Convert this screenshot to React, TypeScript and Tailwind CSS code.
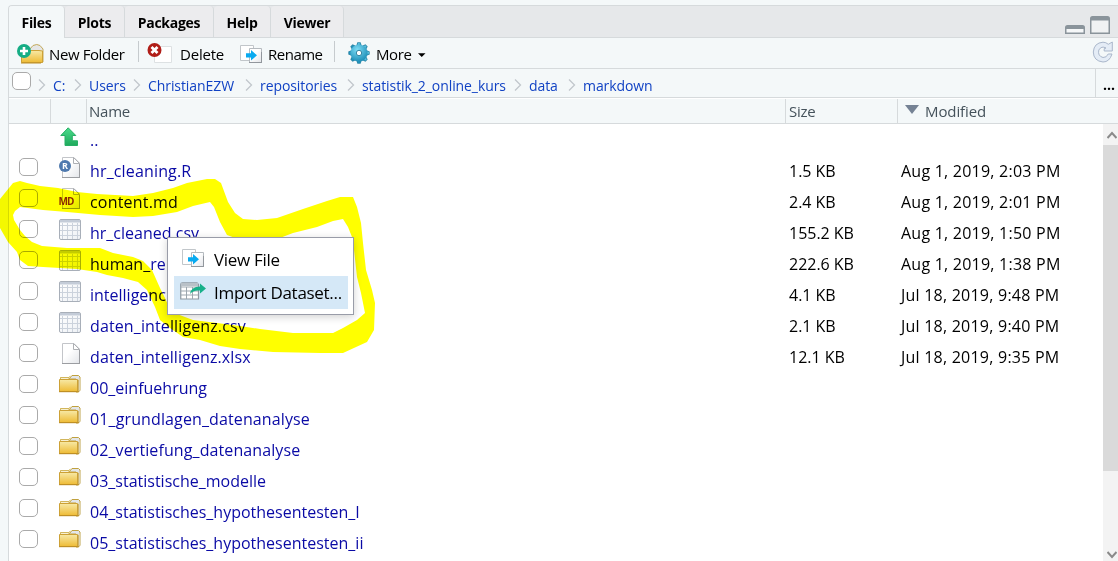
import React from "react";

type Kind = "r" | "md" | "csv" | "file" | "folder";

const files: { name: string; kind: Kind; size?: string; date?: string }[] = [
  { name: "hr_cleaning.R", kind: "r", size: "1.5 KB", date: "Aug 1, 2019, 2:03 PM" },
  { name: "content.md", kind: "md", size: "2.4 KB", date: "Aug 1, 2019, 2:01 PM" },
  { name: "hr_cleaned.csv", kind: "csv", size: "155.2 KB", date: "Aug 1, 2019, 1:50 PM" },
  { name: "human_re", kind: "csv", size: "222.6 KB", date: "Aug 1, 2019, 1:38 PM" },
  { name: "intelligenc", kind: "csv", size: "4.1 KB", date: "Jul 18, 2019, 9:48 PM" },
  { name: "daten_intelligenz.csv", kind: "csv", size: "2.1 KB", date: "Jul 18, 2019, 9:40 PM" },
  { name: "daten_intelligenz.xlsx", kind: "file", size: "12.1 KB", date: "Jul 18, 2019, 9:35 PM" },
  { name: "00_einfuehrung", kind: "folder" },
  { name: "01_grundlagen_datenanalyse", kind: "folder" },
  { name: "02_vertiefung_datenanalyse", kind: "folder" },
  { name: "03_statistische_modelle", kind: "folder" },
  { name: "04_statistisches_hypothesentesten_I", kind: "folder" },
  { name: "05_statistisches_hypothesentesten_ii", kind: "folder" },
];

const nameTracking: Record<string, string> = {
  "hr_cleaning.R": "tracking-[0.15px]",
  "content.md": "tracking-[0.2px]",
  "daten_intelligenz.csv": "tracking-[0.12px]",
  "daten_intelligenz.xlsx": "tracking-[0.1px]",
  "01_grundlagen_datenanalyse": "tracking-[0.12px]",
  "02_vertiefung_datenanalyse": "tracking-[0.1px]",
};

const tabs = [
  { name: "Files", width: "w-[56px]" },
  { name: "Plots", width: "w-[60px]" },
  { name: "Packages", width: "w-[89px]" },
  { name: "Help", width: "w-[57px]" },
  { name: "Viewer", width: "w-[73px]" },
];

const crumbs = [
  { name: "C:", width: "w-[36px]" },
  { name: "Users", width: "w-[59px]" },
  { name: "ChristianEZW", width: "w-[112px]" },
  { name: "repositories", width: "w-[102px]" },
  { name: "statistik_2_online_kurs", width: "w-[167px]" },
  { name: "data", width: "w-[54px]" },
  { name: "markdown", width: "w-[90px]" },
];

function Defs() {
  return (
    <svg className="absolute h-0 w-0">
      <defs>
        <linearGradient id="gold" x1="0" y1="0" x2="0" y2="1">
          <stop offset="0" stopColor="#f7e9a6" />
          <stop offset="1" stopColor="#eebb35" />
        </linearGradient>
        <linearGradient id="paper" x1="0" y1="0" x2="1" y2="1">
          <stop offset="0.4" stopColor="#ffffff" />
          <stop offset="1" stopColor="#e3e5e9" />
        </linearGradient>
        <linearGradient id="green" x1="0" y1="0" x2="0" y2="1">
          <stop offset="0" stopColor="#4bdc8b" />
          <stop offset="1" stopColor="#1fa95c" />
        </linearGradient>
        <linearGradient id="cell" x1="0" y1="0" x2="1" y2="1">
          <stop offset="0" stopColor="#ffffff" />
          <stop offset="1" stopColor="#eef1f5" />
        </linearGradient>
        <radialGradient id="gear" cx="0.4" cy="0.3" r="0.7">
          <stop offset="0" stopColor="#7ddcf5" />
          <stop offset="1" stopColor="#1f8fb8" />
        </radialGradient>
      </defs>
    </svg>
  );
}

function FileIcon({ kind }: { kind: Kind }) {
  if (kind === "folder")
    return (
      <svg width="24" height="22" viewBox="0 0 24 22">
        <path d="M10 5 13 1.5H19.5L21 3V16.5L19 18H17V5Z" fill="#e3e6ea" stroke="#c0a13e" />
        <path d="M20.5 4.5V16.5" stroke="#ddd3ae" strokeWidth="2" />
        <path d="M1.5 6V3.8H9.5L11.5 1.8" fill="none" stroke="#d8be67" />
        <path d="M1.5 3.5H10V6H1.5Z" fill="#f7f0d2" stroke="#d2b65c" />
        <path d="M.5 5.5H18.5V17.5H.5Z" fill="url(#gold)" stroke="#cda136" />
        <path d="M0 17.7H20" stroke="#bc8c21" />
        <path d="M19.2 6V17.5" stroke="#c9a23e" />
      </svg>
    );
  if (kind === "csv")
    return (
      <svg width="24" height="22" viewBox="0 0 24 22">
        <rect x=".5" y=".5" width="21" height="20" rx="1.5" fill="url(#cell)" stroke="#a8afb9" />
        <path d="M1 1H21V3.5H1Z" fill="#c4ccd8" />
        <path d="M1 6.5H21M1 11.5H21M1 16.5H21M3.5 4V20M8.5 4V20M13.5 4V20M18.5 4V20" stroke="#cbd2dc" fill="none" />
      </svg>
    );
  return (
    <svg width="24" height="22" viewBox="0 0 24 22">
      <path d="M3.5.5H15L20.5 6V20.5H3.5Z" fill="url(#paper)" stroke="#c3c5c9" />
      <path d="M3 20.5H21M20.5 7V20" stroke="#9b9da1" />
      <path d="M14.5.5V6.5H20.5Z" fill="#fff" stroke="#aeb0b4" />
      {kind === "r" && (
        <>
          <circle cx="6" cy="9" r="6" fill="#4f79ae" />
          <text x="6" y="12.3" textAnchor="middle" fontSize="9" fontWeight="700" fontFamily="Open Sans, sans-serif" fill="#fff">R</text>
        </>
      )}
      {kind === "md" && (
        <text x="-.5" y="16.5" fontSize="10" fontWeight="700" textLength="16" fontFamily="Open Sans, sans-serif" fill="#8c2a10">MD</text>
      )}
    </svg>
  );
}

function PagesArrow() {
  return (
    <svg width="23" height="20" viewBox="0 0 23 20">
      <path d="M.5.5H13.5V15.5H.5Z" fill="#fff" stroke="#c1c6ca" />
      <path d="M9.5 3.5H21.5V17.5H9.5Z" fill="url(#paper)" stroke="#b5babf" />
      <path d="M9 17.5H22M21.5 7V18" stroke="#92979d" />
      <path d="M6 8.2H11V5L17 10.3 11 15.5V12.5H6Z" fill="#09aaf0" />
    </svg>
  );
}

function Checkbox() {
  return <span className="block h-[18px] w-[19px] shrink-0 rounded-[5px] border border-[#aaaaaa] bg-white" />;
}

function Separator() {
  return <span className="mb-1 h-[21px] w-px shrink-0 bg-[#c6cbce]" />;
}

export default function App() {
  return (
    <div className="relative isolate h-[561px] w-[1118px] overflow-hidden bg-[#f4f8f9] pt-[5px] pl-2 font-['Open_Sans',sans-serif] text-black">
      <Defs />
      <div className="flex h-[556px] flex-col rounded-tl-[4px] border-t border-l border-[#d6dadc] bg-white">
        <div className="flex h-8 shrink-0 rounded-tl-[4px] bg-[#e6e8ea]">
          {tabs.map((t, i) => (
            <div
              key={t.name}
              className={`${t.width} flex h-8 shrink-0 items-center justify-center rounded-t-[4px] border-r border-[#d6dadc] text-[14px] font-bold tracking-[-0.3px] ${
                i === 0 ? "bg-[#f4f8f9] pt-px" : "border-b bg-[#ececee] pt-0.5"
              }`}
            >
              {t.name}
            </div>
          ))}
          <div className="flex grow items-end justify-end gap-[5px] border-b border-[#d6dadc] pr-2 pb-[3px]">
            <svg width="20" height="9" viewBox="0 0 20 9">
              <path d="M.75 8.25V2.5Q.75.75 2.5.75H17.5Q19.25.75 19.25 2.5V8.25Z" fill="#f5f7f8" stroke="#8a949b" strokeWidth="1.5" />
              <path d="M1 1H19V4H1Z" fill="#8a949b" />
            </svg>
            <svg width="20" height="18" viewBox="0 0 20 18">
              <path d="M.75 17.25V2.5Q.75.75 2.5.75H17.5Q19.25.75 19.25 2.5V17.25Z" fill="#f0f2f3" stroke="#8a949b" strokeWidth="1.5" />
              <path d="M1 1H19V4.5H1Z" fill="#8a949b" />
            </svg>
          </div>
        </div>

        <div className="flex h-[31px] shrink-0 items-center border-b border-[#d6dadc] bg-[#f4f8f9] pl-2 text-[15px]">
          <svg width="27" height="22" viewBox="0 0 27 22" className="mt-px">
            <path d="M12 7 16 2.5Q20 .5 23 2.5L26 6V19H22Z" fill="#e5e6e6" stroke="#c3a95a" />
            <path d="M4.5 7.5H22L25.5 8V19.5H4.5Z" fill="url(#gold)" stroke="#cda136" />
            <path d="M4 20H24" stroke="#bd8d22" />
            <circle cx="7" cy="8" r="7" fill="#16ad85" />
            <path d="M7 4V12M3 8H11" stroke="#fff" strokeWidth="2.6" />
          </svg>
          <span className="mt-0.5 ml-[5px] w-[89px] whitespace-nowrap tracking-[-0.4px]">New Folder</span>
          <Separator />
          <svg width="25" height="22" viewBox="0 0 25 22" className="mt-[-1px] ml-2">
            <path d="M7.5 4.5H24.5V20.5H7.5Z" fill="#fff" stroke="#dde1e3" />
            <circle cx="7.5" cy="8" r="7" fill="#b01e18" />
            <path d="M4.5 5 10.5 11M10.5 5 4.5 11" stroke="#fff" strokeWidth="2.8" />
          </svg>
          <span className="mt-0.5 ml-2 w-[60px] tracking-[-0.2px]">Delete</span>
          <div className="mt-[3px]"><PagesArrow /></div>
          <span className="mt-0.5 ml-[5px] w-[66px] tracking-[-0.5px]">Rename</span>
          <Separator />
          <svg width="24" height="24" viewBox="0 0 24 24" className="ml-[12px]">
            <g fill="#2f88a8">
              {[0, 45, 90, 135].map((a) => (
                <path key={a} d="M9.5 4 10.4 1.3H13.6L14.5 4V20L13.6 22.7H10.4L9.5 20Z" transform={`rotate(${a} 12 12)`} />
              ))}
            </g>
            <g fill="url(#gear)">
              {[0, 45, 90, 135].map((a) => (
                <path key={a} d="M10.2 4 11 2H13L13.8 4V20L13 22H11L10.2 20Z" transform={`rotate(${a} 12 12)`} />
              ))}
              <circle cx="12" cy="12" r="8.6" />
            </g>
            <circle cx="12" cy="12" r="2.7" fill="#fff" stroke="#3385a3" />
          </svg>
          <span className="mt-0.5 ml-[5px] w-[42px] tracking-[-0.4px]">More</span>
          <svg width="8" height="4" viewBox="0 0 8 4" className="mt-[3px]"><path d="M0 .3H7.5L3.75 4Z" /></svg>
          <svg width="22" height="22" viewBox="0 0 22 22" className="mt-[-3px] mr-[4px] ml-auto">
            <path d="M16.3 3.3 20.3 1V10H12.2V7.7L14 7Q9.5 4.5 6.8 9Q5.5 15 11 16.5Q14.5 16.8 16.2 13H20Q17.5 21 11 21Q1.5 20 1.3 11Q2 1.8 11 1.2Q14 1.2 16.3 3.3Z" fill="#e4ecf6" stroke="#aab7cb" />
          </svg>
        </div>

        <div className="flex h-[29px] shrink-0 items-center border-b border-[#d6dadc] bg-[#f4f8f9] pl-[3px] text-[14px] text-[#1142c4]">
          <div className="mb-1"><Checkbox /></div>
          <div className="mt-[5px] ml-[7px] flex">
            {crumbs.map((c) => (
              <div key={c.name} className={`${c.width} flex shrink-0 items-center whitespace-nowrap tracking-[-0.08px]`}>
                <svg width="8" height="12" viewBox="0 0 8 12" className="mt-[-1px] mr-[7px] shrink-0">
                  <path d="M1 .5 6.5 6 1 11.5" fill="none" stroke="#c1c7cc" strokeWidth="1.3" />
                </svg>
                {c.name}
              </div>
            ))}
          </div>
          <div className="ml-auto flex h-full w-[23px] items-center border-l border-[#d6dadc] pt-0.5 pl-[7px] text-[14px] font-bold text-black">...</div>
        </div>

        <div className="mt-px flex h-[25px] shrink-0 items-center border-b border-[#d6dadc] bg-[#f4f8f9] text-[15px] tracking-[-0.25px] text-[#45525b]">
          <div className="h-full w-[42px] border-r border-[#d6dadc]" />
          <div className="h-full w-9 border-r border-[#d6dadc]" />
          <div className="flex h-full w-[699px] items-center border-r border-[#d6dadc] pl-[2px]">Name</div>
          <div className="flex h-full w-[112px] items-center border-r border-[#d6dadc] pl-[3px]">Size</div>
          <div className="flex items-center pl-[7px] tracking-[-0.1px]">
            <svg width="14" height="9" viewBox="0 0 14 9" className="mt-[-3px] mr-[6px]"><path d="M0 0H14L7 9Z" fill="#758294" /></svg>
            Modified
          </div>
        </div>

        <div className="flex min-h-0 grow overflow-hidden text-[16px]">
          <div className="grow">
            <div className="flex h-8 items-start pl-[51px] text-[#0a0aa5]">
              <svg width="21" height="20" viewBox="0 0 21 20" className="mt-[3px]">
                <path d="M8.2.8 15.8 8.5H12.3V13.8H17.5V18.5H5V8.5H.8Z" fill="url(#green)" stroke="#27ae65" />
              </svg>
              <span className="ml-[9px] pt-[4px]">..</span>
            </div>
            {files.map((f) => (
              <div key={f.name} className="flex h-[31px] items-start whitespace-nowrap">
                <div className="w-[50px] pt-[2px] pl-[10px]"><Checkbox /></div>
                <div className="w-[31px] pt-px"><FileIcon kind={f.kind} /></div>
                <div className={`w-[699px] pt-[3px] leading-[24px] text-[#0a0aa5] ${nameTracking[f.name] ?? ""}`}>{f.name}</div>
                <div className="w-[112px] pt-[3px] leading-[24px] tracking-[-0.02px]">{f.size}</div>
                <div className="pt-[3px] leading-[24px] tracking-[0.23px]">{f.date}</div>
              </div>
            ))}
          </div>
          <div className="flex w-[15px] shrink-0 flex-col bg-[#f3f3f3]">
            <div className="flex h-[21px] items-center pl-1">
              <svg width="10" height="8" viewBox="0 0 10 8"><path d="M.5 7 5 2 9.5 7" fill="none" stroke="#8a8a8a" strokeWidth="2" /></svg>
            </div>
            <div className="h-[326px] bg-[#dadada]" />
            <div className="mt-auto pb-[2px] pl-1">
              <svg className="block" width="10" height="8" viewBox="0 0 10 8"><path d="M.5 1 5 6 9.5 1" fill="none" stroke="#8a8a8a" strokeWidth="2" /></svg>
            </div>
          </div>
        </div>
      </div>

      <svg className="pointer-events-none absolute top-0 left-0 mix-blend-multiply" width="1118" height="561" viewBox="0 0 1118 561">
        <path
          fill="#ffff00"
          fillRule="evenodd"
          d="M0 199 13 183 20 181 27 183 40 186 58 188 77 192 97 194 133 196 153 193 173 188 187 183 207 179 215 179 221 183 228 202 235 213 243 219 257 220 277 218 303 209 327 201 340 197 353 197 357 207 361 223 363 243 366 270 372 290 375 303 374 330 367 342 343 353 320 353 273 352 240 349 220 346 200 340 183 337 170 328 160 320 155 307 147 290 138 282 123 278 107 275 97 272 77 269 43 267 28 266 20 260 17 252 8 242 0 228Z
             M13 215 15 211 20 207 43 210 67 212 100 215 133 217 153 216 177 212 193 206 210 202 214 207 220 222 227 235 238 239 257 241 272 241 293 233 317 227 333 221 343 219 348 227 352 237 354 250 357 277 361 293 365 313 357 320 343 328 333 333 293 333 260 329 240 326 217 323 193 320 177 314 169 307 165 298 160 288 152 270 143 261 133 257 113 253 100 248 67 248 42 246 32 242 25 236 20 230 14 220Z"
        />
      </svg>

      <div className="absolute top-[237px] left-[167px] h-[78px] w-[187px] border border-[#999ca8] bg-white p-[6px] text-[17px] shadow-[0_2px_8px_rgba(0,0,0,0.18)]">
        <div className="flex h-8 items-center pl-2 whitespace-nowrap">
          <div className="mb-[3px]"><PagesArrow /></div>
          <span className="ml-[9px] tracking-[-0.3px]">View File</span>
        </div>
        <div className="flex h-[33px] w-[174px] items-center bg-[#d5e8f7] pl-1.5 whitespace-nowrap">
          <svg width="27" height="18" viewBox="0 0 27 18" className="mt-[-4px]">
            <path d="M.75 17V2.5Q.75.75 2.5.75H17L18.5 2.5V17Z" fill="#fff" stroke="#8d98a2" strokeWidth="1.2" />
            <path d="M1 1H18V4H1Z" fill="#b9c1c8" />
            <path d="M1 5H18M1 9H18M1 13H18M6.5 5V17M12.5 5V17" fill="none" stroke="#9da7af" />
            <path d="M10 12Q11 4.5 20 4.5V1.5L26 6.5 20 11.5V8.5Q13 8 10 12Z" fill="#18b08a" />
          </svg>
          <span className="ml-[7px] tracking-[-0.3px]">Import Dataset...</span>
        </div>
      </div>
    </div>
  );
}
